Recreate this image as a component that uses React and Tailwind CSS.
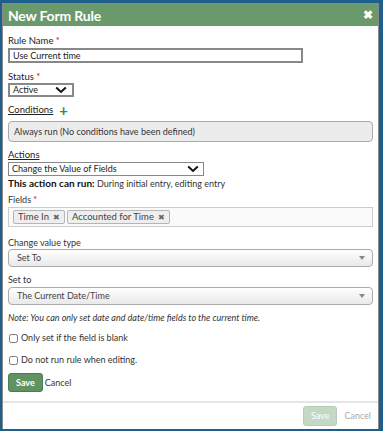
import { useState } from "react"

const Caret = () => (
  <svg width="12" height="8" viewBox="0 0 12 8" className="shrink-0">
    <path d="M1.2 1.5 L6 6 L10.8 1.5" fill="none" stroke="#111" strokeWidth="2" />
  </svg>
)

const Tri = () => (
  <svg width="6" height="4" viewBox="0 0 6 4" className="shrink-0">
    <path d="M0 0 L6 0 L3 4 Z" fill="#888" />
  </svg>
)

function Tag({ label }) {
  return (
    <span className="flex items-center gap-[4px] h-[14px] px-[4px] border border-[#b5b5b5] rounded-[2px] bg-[#eeeeee] text-[#444] text-[9.5px]">
      {label}
      <span className="text-[#666] text-[8px] leading-none">✖</span>
    </span>
  )
}

function Dropdown({ value }) {
  return (
    <div className="flex items-center justify-between h-[18px] pl-[8px] pr-[7px] border border-[#aaa] rounded-[4px] bg-gradient-to-b from-white to-[#e9e9e9] text-[#444]">
      <span>{value}</span>
      <Tri />
    </div>
  )
}

export default function App() {
  const [onlyBlank, setOnlyBlank] = useState(false)
  const [noEdit, setNoEdit] = useState(false)

  return (
    <div className="w-[383px] h-[431px] bg-[#1f5f8d] pt-[3px] pl-[2px] pr-[4px] pb-[2px] font-['Lato',sans-serif] text-[9px] text-[#222]">
      <div className="h-full flex flex-col bg-white border-l border-t border-r border-[#8a8a8a]">
        {/* Header */}
        <div className="flex items-center justify-between h-[22px] pl-[5px] pr-[5px] bg-[#6a9a6b] text-white">
          <h1 className="text-[14px] font-bold tracking-[-0.2px]">New Form Rule</h1>
          <span className="text-[12px] font-bold leading-none">✖</span>
        </div>

        {/* Body */}
        <div className="flex-1 px-[5px] pt-[10px] leading-[10px]">
          <div className="text-[9.5px]">Rule Name <span className="text-red-600">*</span></div>
          <div className="w-[295px] h-[15px] mt-[2px] px-[3px] border-2 border-[#888] flex items-center text-[#222]">
            Use Current time
          </div>

          <div className="mt-[9px] text-[9.5px]">Status <span className="text-red-600">*</span></div>
          <div className="w-[66px] h-[14px] mt-[1px] pl-[3px] pr-[5px] border-2 border-[#888] flex items-center justify-between">
            <span>Active</span>
            <Caret />
          </div>

          <div className="mt-[8px] h-[10px] flex items-center gap-[6px] text-[9.5px]">
            <span className="underline">Conditions</span>
            <span className="text-[#3c8a3c] text-[15px] font-bold leading-none">+</span>
          </div>
          <div className="mt-[6px] h-[21px] px-[5px] flex items-center border border-[#aaa] rounded-[4px] bg-[#ececec] text-[#333]">
            Always run (No conditions have been defined)
          </div>

          <div className="mt-[8px] underline text-[9.5px]">Actions</div>
          <div className="w-[196px] h-[14px] mt-[2px] pl-[3px] pr-[4px] border border-[#888] flex items-center justify-between">
            <span>Change the Value of Fields</span>
            <Caret />
          </div>
          <div className="mt-[2px] text-[#333]">
            <span className="font-bold text-[10px] text-[#111]">This action can run:</span> During initial entry, editing entry
          </div>

          <div className="mt-[6px] text-[#333]">Fields <span className="text-red-600">*</span></div>
          <div className="mt-[2px] h-[20px] px-[4px] flex items-center gap-[2px] border border-[#ccc] bg-[#fafafa]">
            <Tag label="Time In" />
            <Tag label="Accounted for Time" />
          </div>

          <div className="mt-[11px] text-[#333]">Change value type</div>
          <div className="mt-[1px]">
            <Dropdown value="Set To" />
          </div>

          <div className="mt-[8px] text-[#333]">Set to</div>
          <div className="mt-[2px]">
            <Dropdown value="The Current Date/Time" />
          </div>

          <p className="mt-[8px] italic text-[#333]">
            Note: You can only set date and date/time fields to the current time.
          </p>

          <label className="mt-[10px] flex items-center gap-[3px] text-[#333]">
            <input type="checkbox" checked={onlyBlank} onChange={(e) => setOnlyBlank(e.target.checked)} className="w-[9px] h-[9px] m-0 ml-[1px]" />
            Only set if the field is blank
          </label>
          <label className="mt-[12px] flex items-center gap-[3px] text-[#333]">
            <input type="checkbox" checked={noEdit} onChange={(e) => setNoEdit(e.target.checked)} className="w-[9px] h-[9px] m-0 ml-[1px]" />
            Do not run rule when editing.
          </label>

          <div className="mt-[8px] flex items-center gap-[2px]">
            <button className="h-[19px] px-[7px] rounded-[3px] border border-[#4d7a4f] bg-[#5f9462] text-white font-bold">Save</button>
            <button className="text-[#333]">Cancel</button>
          </div>
        </div>

        {/* Footer */}
        <div className="h-[28px] flex items-center justify-end gap-[7px] pr-[7px] border-t-2 border-[#e5e5e5]">
          <button className="h-[20px] px-[7px] rounded-[3px] border border-[#b4cbb5] bg-[#c4d8c5] text-white">Save</button>
          <button className="text-[#aaa]">Cancel</button>
        </div>
      </div>
    </div>
  )
}
